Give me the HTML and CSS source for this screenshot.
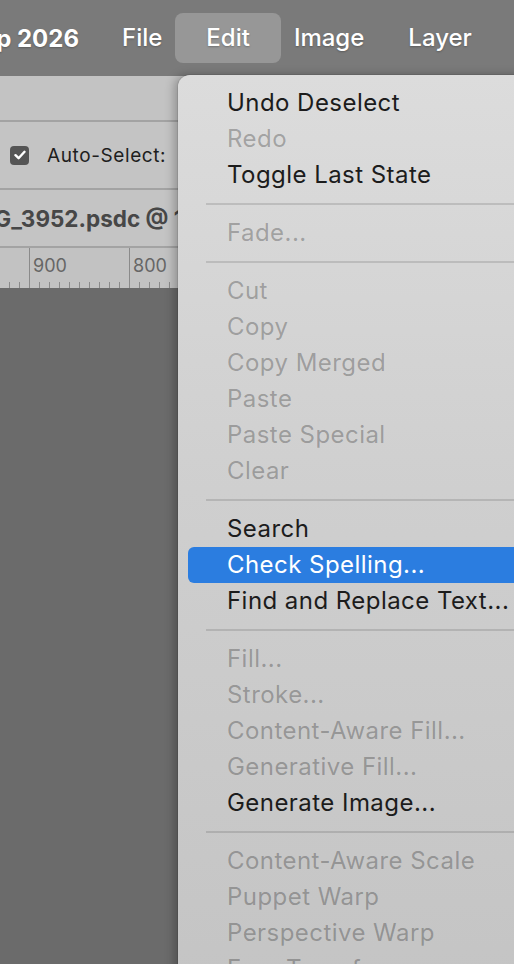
FILE: index.html
```html
<!DOCTYPE html>
<html>
<head>
<meta charset="utf-8">
<link rel="stylesheet" href="styles.css">
</head>
<body>
<div class="screen">
  <div class="menubar">
    <span class="app"><span>Photoshop 2026</span></span>
    <span class="mb-item">File</span>
    <span class="mb-item active">Edit</span>
    <span class="mb-item">Image</span>
    <span class="mb-item">Layer</span>
  </div>
  <div class="panel-strip"></div>
  <div class="options-bar">
    <span class="checkbox">
      <svg width="12" height="10" viewBox="0 0 12 10"><path d="M1.5 5.2 L4.6 8.2 L10.5 1.8" fill="none" stroke="#fff" stroke-width="2.4" stroke-linecap="round" stroke-linejoin="round"/></svg>
    </span>
    <span class="opt-label">Auto-Select:</span>
  </div>
  <div class="tabbar"><span class="doc-title">IMG_3952.psdc @ 100%</span></div>
  <div class="ruler">
    <div class="ruler-seg"><span class="ruler-num">900</span></div>
    <div class="ruler-seg"><span class="ruler-num">800</span></div>
  </div>
  <div class="canvas"></div>

  <div class="menu">
    <div class="mi">Undo Deselect</div>
    <div class="mi dis">Redo</div>
    <div class="mi">Toggle Last State</div>
    <div class="sep"></div>
    <div class="mi dis">Fade...</div>
    <div class="sep"></div>
    <div class="mi dis">Cut</div>
    <div class="mi dis">Copy</div>
    <div class="mi dis">Copy Merged</div>
    <div class="mi dis">Paste</div>
    <div class="mi dis">Paste Special</div>
    <div class="mi dis">Clear</div>
    <div class="sep"></div>
    <div class="mi">Search</div>
    <div class="mi hl">Check Spelling...</div>
    <div class="mi">Find and Replace Text...</div>
    <div class="sep"></div>
    <div class="mi dis">Fill...</div>
    <div class="mi dis">Stroke...</div>
    <div class="mi dis">Content-Aware Fill...</div>
    <div class="mi dis">Generative Fill...</div>
    <div class="mi">Generate Image...</div>
    <div class="sep"></div>
    <div class="mi dis">Content-Aware Scale</div>
    <div class="mi dis">Puppet Warp</div>
    <div class="mi dis">Perspective Warp</div>
    <div class="mi dis">Free Transform</div>
  </div>
</div>
</body>
</html>
```
FILE: styles.css
```css
* { box-sizing: border-box; }
html, body { margin: 0; padding: 0; }
body {
  width: 514px;
  height: 964px;
  overflow: hidden;
  font-family: Inter, "Noto Sans", "Liberation Sans", sans-serif;
}
.screen {
  position: relative;
  width: 514px;
  height: 964px;
  overflow: hidden;
  display: flex;
  flex-direction: column;
  background: #6b6b6b;
}
.menubar {
  height: 76px;
  flex: none;
  background: #7a7a7a;
  display: flex;
  align-items: center;
  white-space: nowrap;
  color: #fff;
  font-size: 24px;
  font-weight: 500;
  text-shadow: 0 1px 2px rgba(0,0,0,0.25);
}
.app {
  font-weight: 700;
  width: 79px;
  flex: none;
  display: flex;
  justify-content: flex-end;
  margin-right: 21px;
}
.mb-item {
  padding: 0 22px;
  height: 50px;
  line-height: 50px;
  border-radius: 8px;
  flex: none;
}
.mb-item.active {
  background: rgba(255,255,255,0.22);
  padding: 0 31px;
  margin: 0 -9px;
}
.panel-strip {
  height: 46px;
  flex: none;
  background: #c3c3c3;
  border-bottom: 2px solid #a3a3a3;
}
.options-bar {
  height: 68px;
  flex: none;
  background: #c4c4c4;
  border-bottom: 2px solid #a3a3a3;
  display: flex;
  align-items: center;
  padding-left: 10px;
}
.checkbox {
  width: 19px;
  height: 19px;
  border-radius: 4px;
  background: #555;
  display: flex;
  align-items: center;
  justify-content: center;
  margin-right: 18px;
}
.opt-label {
  font-size: 19px;
  color: #1e1e1e;
  letter-spacing: 0.6px;
}
.tabbar {
  height: 58px;
  flex: none;
  background: #c4c4c4;
  border-bottom: 2px solid #a3a3a3;
  display: flex;
  align-items: center;
  white-space: nowrap;
}
.doc-title {
  font-size: 22.5px;
  font-weight: 700;
  color: #474747;
  margin-left: -33px;
}
.ruler {
  height: 40px;
  flex: none;
  background: #c2c2c2;
  display: flex;
  padding-left: 29px;
  background-image: repeating-linear-gradient(90deg, transparent 0 9px, #8a8a8a 9px 10px);
  background-size: 100% 6px;
  background-repeat: no-repeat;
  background-position: 0 100%;
}
.ruler-seg {
  width: 100px;
  flex: none;
  border-left: 1px solid #8a8a8a;
  padding-left: 3px;
  display: flex;
  align-items: center;
}
.ruler-num {
  font-size: 18px;
  color: #666;
  margin-top: -6px;
}
.canvas {
  flex: 1;
  background: #6b6b6b;
}
.menu {
  position: absolute;
  left: 178px;
  top: 75px;
  width: 360px;
  height: 920px;
  border-top-left-radius: 12px;
  background: linear-gradient(180deg, #dcdcdc 0%, #cfcfcf 45%, #c4c4c4 100%);
  box-shadow: -4px 0 10px rgba(0,0,0,0.25), 0 0 0 1px rgba(0,0,0,0.08);
  padding-top: 10px;
  white-space: nowrap;
}
.mi {
  height: 36px;
  line-height: 36px;
  margin-left: 10px;
  padding-left: 39px;
  border-radius: 6px;
  font-size: 24px;
  letter-spacing: 0.45px;
  color: #1c1c1c;
}
.mi.dis {
  color: rgba(0,0,0,0.27);
}
.mi.hl {
  background: #2b7de0;
  color: #fff;
}
.sep {
  height: 22px;
  margin-left: 28px;
  display: flex;
  align-items: center;
}
.sep::before {
  content: "";
  display: block;
  width: 100%;
  height: 2px;
  background: rgba(0,0,0,0.12);
}
```
